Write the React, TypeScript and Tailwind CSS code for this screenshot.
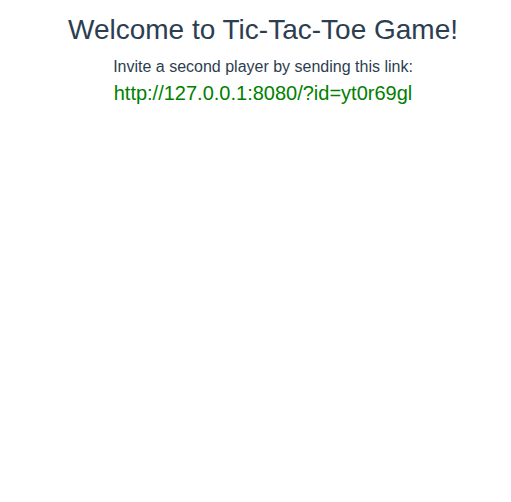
export default function App() {
  return (
    <div className="flex flex-col items-center pl-[15px] pt-[14px] text-center font-['Liberation_Sans',Arial,sans-serif] text-[#2c3e50]">
      <h1 className="text-[28px] leading-[32px]">Welcome to Tic-Tac-Toe Game!</h1>
      <p className="mt-[12px] text-[16px] leading-[18px]">Invite a second player by sending this link:</p>
      <a href="#" className="mt-[6px] text-[20px] leading-[23px] text-[#008000]">
        http://127.0.0.1:8080/?id=yt0r69gl
      </a>
    </div>
  );
}
